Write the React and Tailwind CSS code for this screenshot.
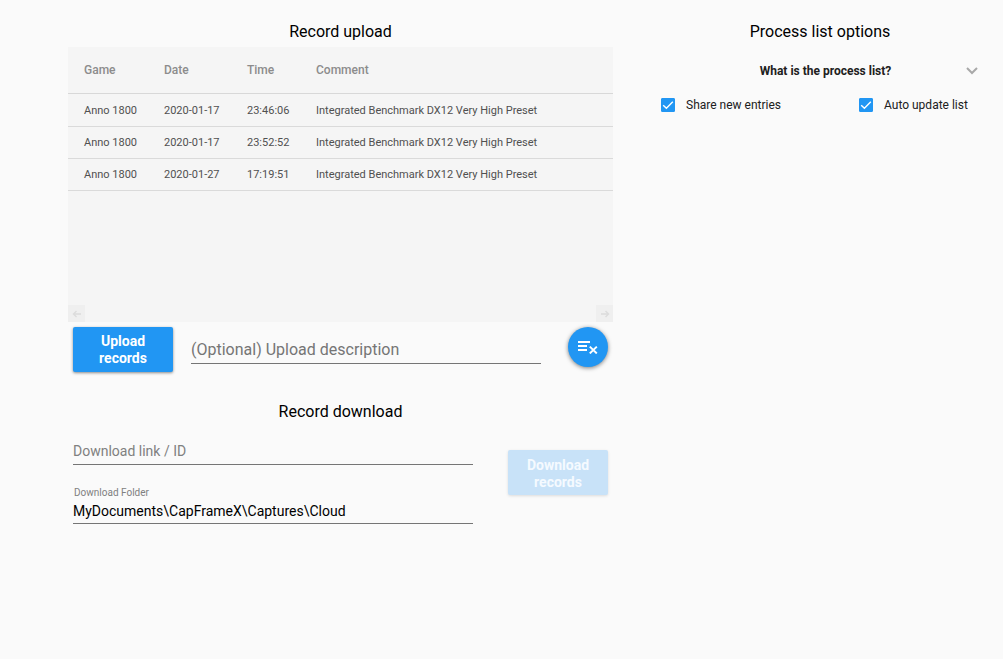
import React, { useState } from 'react';

const records = [
  { id: 1, game: 'Anno 1800', date: '2020-01-17', time: '23:46:06', comment: 'Integrated Benchmark DX12 Very High Preset' },
  { id: 2, game: 'Anno 1800', date: '2020-01-17', time: '23:52:52', comment: 'Integrated Benchmark DX12 Very High Preset' },
  { id: 3, game: 'Anno 1800', date: '2020-01-27', time: '17:19:51', comment: 'Integrated Benchmark DX12 Very High Preset' },
];

function ScrollArrow({ label, path }) {
  return (
    <button aria-label={label} disabled className="flex h-[17px] w-[17px] items-center justify-center bg-[#efefef]">
      <svg viewBox="0 0 10 10" className="h-[10px] w-[10px]" fill="none" stroke="#dcdcdc" strokeWidth="1.4">
        <path d={path} />
      </svg>
    </button>
  );
}

function RecordTable({ rows }) {
  return (
    <div className="flex min-h-[275px] flex-col justify-between bg-[#f5f5f5]">
      <table className="w-full table-fixed border-collapse text-left">
        <thead>
          <tr className="h-[46px] border-b border-[#d8d8d8] text-xs text-[#8c8c8c]">
            <th className="w-[80px] pl-4 font-medium">Game</th>
            <th className="w-[83px] pl-4 font-medium">Date</th>
            <th className="w-[69px] pl-4 font-medium">Time</th>
            <th className="pl-4 font-medium">Comment</th>
          </tr>
        </thead>
        <tbody>
          {rows.map((row) => (
            <tr
              key={row.id}
              className="h-8 border-b border-[#dadada] text-[11px] whitespace-nowrap text-[#505050] first:h-[33px]"
            >
              <td className="pt-[3px] pl-4">{row.game}</td>
              <td className="pt-[3px] pl-4">{row.date}</td>
              <td className="pt-[3px] pl-4">{row.time}</td>
              <td className="pt-[3px] pl-4">{row.comment}</td>
            </tr>
          ))}
        </tbody>
      </table>
      <div className="flex justify-between">
        <ScrollArrow label="Scroll left" path="M9 5H1.5M4.5 2L1.5 5L4.5 8" />
        <ScrollArrow label="Scroll right" path="M1 5H8.5M5.5 2L8.5 5L5.5 8" />
      </div>
    </div>
  );
}

function Option({ label, checked, onChange }) {
  return (
    <label className="flex items-center gap-[11px] text-xs text-[#202020]">
      <span className="grid">
        <input
          type="checkbox"
          checked={checked}
          onChange={(e) => onChange(e.target.checked)}
          className="col-start-1 row-start-1 h-[14px] w-[14px] appearance-none rounded-[1px] border border-[#757575] checked:border-[#2196f3] checked:bg-[#2196f3]"
        />
        {checked && (
          <svg viewBox="0 0 14 14" className="pointer-events-none col-start-1 row-start-1 h-[14px] w-[14px]" fill="none" stroke="white" strokeWidth="1.4">
            <path d="M2.2 7.2L5.4 10.3L11.8 3.8" />
          </svg>
        )}
      </span>
      {label}
    </label>
  );
}

export default function App() {
  const [description, setDescription] = useState('');
  const [link, setLink] = useState('');
  const [folder, setFolder] = useState('MyDocuments\\CapFrameX\\Captures\\Cloud');
  const [share, setShare] = useState(true);
  const [autoUpdate, setAutoUpdate] = useState(true);

  return (
    <div className="min-h-screen bg-[#fafafa] pt-5 pr-4 pl-[68px] font-[Roboto,sans-serif] text-black">
      <div className="grid grid-cols-[545fr_334fr] gap-10">
        <main>
          <section>
            <h2 className="pb-[3px] text-center text-base">Record upload</h2>
            <RecordTable rows={records} />
            <div className="flex items-start px-[5px] pt-[5px]">
              <button className="w-[100px] rounded-xs bg-[#2196f3] px-4 pt-[6px] pb-[5px] text-sm leading-[17px] font-bold text-white shadow-[0_1px_3px_rgba(0,0,0,0.45)]">
                Upload records
              </button>
              <input
                type="text"
                aria-label="Upload description"
                placeholder="(Optional) Upload description"
                value={description}
                onChange={(e) => setDescription(e.target.value)}
                className="mr-[27px] ml-[18px] h-[37px] min-w-0 flex-1 border-b border-[#757575] pt-2 text-base outline-none placeholder:text-[#757575]"
              />
              <button
                aria-label="Clear list"
                className="flex h-10 w-10 items-center justify-center rounded-full bg-[#2196f3] shadow-[0_1px_4px_rgba(0,0,0,0.5)]"
              >
                <svg viewBox="0 0 20 14" className="h-[14px] w-5" fill="none" stroke="white" strokeWidth="2">
                  <path d="M0 2H12M0 6H9M0 10H9" />
                  <path d="M11.8 6.6L18.8 13.4M18.8 6.6L11.8 13.4" />
                </svg>
              </button>
            </div>
          </section>

          <section className="pt-7">
            <h2 className="text-center text-base">Record download</h2>
            <div className="flex items-start justify-between gap-[35px] px-[5px] pt-[14px]">
              <div className="flex-1">
                <input
                  type="text"
                  aria-label="Download link / ID"
                  placeholder="Download link / ID"
                  value={link}
                  onChange={(e) => setLink(e.target.value)}
                  className="block h-[27px] w-full border-b border-[#757575] text-sm outline-none placeholder:text-[#808080]"
                />
                <label htmlFor="folder" className="block pt-5 pl-px text-[10px] leading-4 text-[#808080]">
                  Download Folder
                </label>
                <input
                  id="folder"
                  type="text"
                  value={folder}
                  onChange={(e) => setFolder(e.target.value)}
                  className="block h-[23px] w-full border-b border-[#757575] pb-0.5 text-sm outline-none"
                />
              </div>
              <button
                disabled
                className="mt-3 w-[100px] rounded-xs bg-[#c8e2f8] px-4 pt-[7px] pb-1 text-sm leading-[17px] font-bold text-[#f5faff] shadow-[0_1px_3px_rgba(0,0,0,0.12)]"
              >
                Download records
              </button>
            </div>
          </section>
        </main>

        <aside>
          <h2 className="text-center text-base">Process list options</h2>
          <button aria-expanded="false" className="mt-[19px] flex w-full items-center pr-[9px] pl-8 text-xs font-bold text-[#202020]">
            <span className="flex-1">What is the process list?</span>
            <svg viewBox="0 0 12 8" className="h-2 w-3" fill="none" stroke="#a8a8a8" strokeWidth="2">
              <path d="M1 1L6 6L11 1" />
            </svg>
          </button>
          <div className="mt-[18px] grid grid-cols-[198fr_128fr] pl-2">
            <Option label="Share new entries" checked={share} onChange={setShare} />
            <Option label="Auto update list" checked={autoUpdate} onChange={setAutoUpdate} />
          </div>
        </aside>
      </div>
    </div>
  );
}
